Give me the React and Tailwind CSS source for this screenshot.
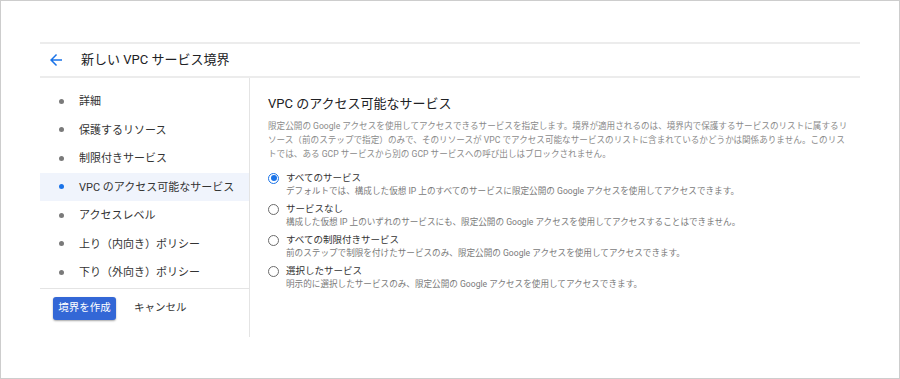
const steps = [
  '詳細',
  '保護するリソース',
  '制限付きサービス',
  'VPC のアクセス可能なサービス',
  'アクセスレベル',
  '上り（内向き）ポリシー',
  '下り（外向き）ポリシー',
]

const options = [
  {
    label: 'すべてのサービス',
    desc: 'デフォルトでは、構成した仮想 IP 上のすべてのサービスに限定公開の Google アクセスを使用してアクセスできます。',
    checked: true,
  },
  {
    label: 'サービスなし',
    desc: '構成した仮想 IP 上のいずれのサービスにも、限定公開の Google アクセスを使用してアクセスすることはできません。',
  },
  {
    label: 'すべての制限付きサービス',
    desc: '前のステップで制限を付けたサービスのみ、限定公開の Google アクセスを使用してアクセスできます。',
  },
  {
    label: '選択したサービス',
    desc: '明示的に選択したサービスのみ、限定公開の Google アクセスを使用してアクセスできます。',
  },
]

function Radio({ checked }) {
  return (
    <span
      className={`flex h-[11px] w-[11px] shrink-0 items-center justify-center rounded-full border ${
        checked ? 'border-[#1a73e8]' : 'border-[#6b6b6b]'
      }`}
    >
      {checked && <span className="h-[6px] w-[6px] rounded-full bg-[#1a73e8]" />}
    </span>
  )
}

export default function App() {
  return (
    <div
      className="h-[379px] w-[900px] border border-[#cdcdcd] bg-white pl-[39px] pr-[39px] pt-[41px] text-[#202124]"
      style={{ fontFamily: 'Roboto, "Noto Sans CJK JP", sans-serif' }}
    >
      <div className="border-t-2 border-[#ececec]">
        <div className="flex h-[34px] items-center border-b-2 border-[#ececec]">
          <svg className="ml-[7px] h-[18px] w-[18px]" viewBox="0 0 24 24" fill="#1a73e8">
            <path d="M20 11H7.83l5.59-5.59L12 4l-8 8 8 8 1.41-1.41L7.83 13H20v-2z" />
          </svg>
          <span className="ml-[16px] text-[13px]">新しい VPC サービス境界</span>
        </div>

        <div className="flex">
          <div className="flex h-[259px] w-[210px] shrink-0 flex-col border-r border-[#e4e4e4]">
            <ul className="pb-[1px] pt-[9px]">
              {steps.map((s, i) => (
                <li
                  key={s}
                  className={`flex h-[28.5px] items-center text-[11px] ${
                    i === 3 ? 'bg-[#f0f4fc]' : ''
                  }`}
                >
                  <span
                    className={`ml-[19px] h-[5px] w-[5px] rounded-full ${
                      i === 3 ? 'bg-[#1a73e8]' : 'bg-[#7a7a7a]'
                    }`}
                  />
                  <span className="ml-[15px] pt-[2px] text-[#333]">{s}</span>
                </li>
              ))}
            </ul>
            <div className="flex items-center border-t border-[#e4e4e4] pl-[13px] pt-[8px]">
              <button className="h-[23px] w-[63px] rounded-[3px] bg-[#3367d6] text-[10.5px] text-white shadow-[0_1px_2px_rgba(0,0,0,0.35)]">
                境界を作成
              </button>
              <span className="ml-[18px] text-[10.5px] text-[#333]">キャンセル</span>
            </div>
          </div>

          <div className="pl-[18px] pt-[17px]">
            <h2 className="text-[13px] leading-[18px]">VPC のアクセス可能なサービス</h2>
            <div className="mt-[6px] text-[8.6px] leading-[14px] text-[#8a8a8a]">
              <div className="whitespace-nowrap">
                限定公開の Google アクセスを使用してアクセスできるサービスを指定します。境界が適用されるのは、境界内で保護するサービスのリストに属するリ
              </div>
              <div className="whitespace-nowrap">
                ソース（前のステップで指定）のみで、そのリソースが VPC でアクセス可能なサービスのリストに含まれているかどうかは関係ありません。このリス
              </div>
              <div className="whitespace-nowrap">
                トでは、ある GCP サービスから別の GCP サービスへの呼び出しはブロックされません。
              </div>
            </div>

            <div className="mt-[10px] flex flex-col gap-[5px]">
              {options.map((o) => (
                <div key={o.label} className="flex">
                  <div className="flex h-[14px] items-center">
                    <Radio checked={o.checked} />
                  </div>
                  <div className="ml-[7px]">
                    <div className="text-[9.5px] leading-[14px] text-[#333]">{o.label}</div>
                    <div className="whitespace-nowrap text-[8.6px] leading-[12px] text-[#7a7a7a]">
                      {o.desc}
                    </div>
                  </div>
                </div>
              ))}
            </div>
          </div>
        </div>
      </div>
    </div>
  )
}
